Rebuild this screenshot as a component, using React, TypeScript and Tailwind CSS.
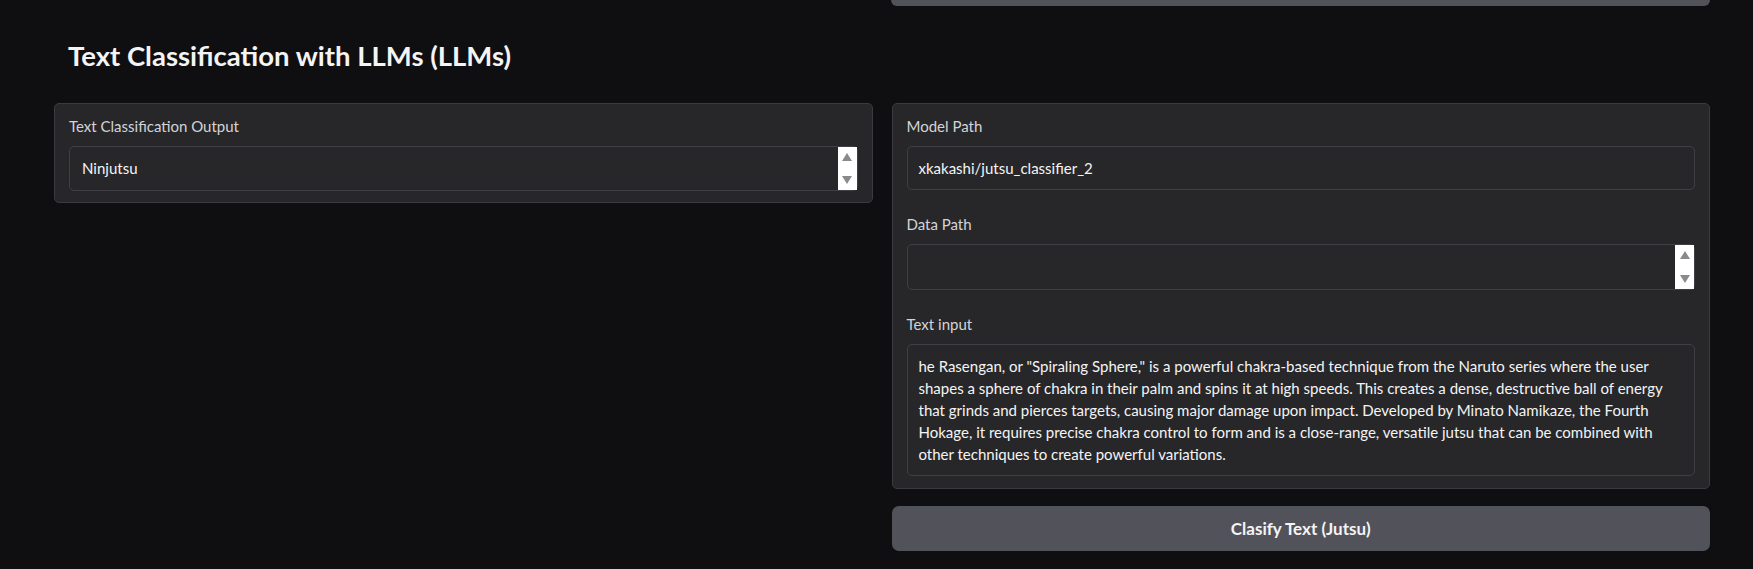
import React from "react";

const FONT = { fontFamily: "Lato, 'Noto Sans', sans-serif" };

function ScrollArrows() {
  return (
    <div className="absolute right-0 top-0 flex h-full w-[19px] flex-col items-center justify-between bg-white py-[5px]">
      <svg width="12" height="10" viewBox="0 0 12 10" aria-hidden>
        <path d="M6 1 L11 9 L1 9 Z" fill="#8a8a8a" />
      </svg>
      <svg width="12" height="10" viewBox="0 0 12 10" aria-hidden>
        <path d="M1 1 L11 1 L6 9 Z" fill="#8a8a8a" />
      </svg>
    </div>
  );
}

function Field({
  label,
  children,
}: {
  label: string;
  children: React.ReactNode;
}) {
  return (
    <div className="flex flex-col gap-[10px]">
      <span className="h-[20px] text-[15px] leading-[20px] text-[#d4d4d8]">{label}</span>
      {children}
    </div>
  );
}

const TEXT_LINES = [
  'he Rasengan, or "Spiraling Sphere," is a powerful chakra-based technique from the Naruto series where the user',
  "shapes a sphere of chakra in their palm and spins it at high speeds. This creates a dense, destructive ball of energy",
  "that grinds and pierces targets, causing major damage upon impact. Developed by Minato Namikaze, the Fourth",
  "Hokage, it requires precise chakra control to form and is a close-range, versatile jutsu that can be combined with",
  "other techniques to create powerful variations.",
];

export default function App() {
  return (
    <div className="h-[569px] w-[1753px] overflow-hidden bg-[#0f0f11]" style={FONT}>
      <div className="flex justify-end pr-[43px]">
        <div className="h-[6px] w-[819px] rounded-b-[6px] bg-[#52525b]" />
      </div>

      <h2 className="mt-[30px] pl-[68px] text-[27.5px] font-bold leading-[40px] text-[#f4f4f5]">
        Text Classification with LLMs (LLMs)
      </h2>

      <div className="mt-[27px] grid grid-cols-2 items-start gap-[19px] pl-[54px] pr-[43px]">
        <div className="rounded-[5px] border border-[#3a3a40] bg-[#27272a] px-[14px] pb-[11px] pt-[12px]">
          <Field label="Text Classification Output">
            <div className="relative h-[45px] rounded-[5px] border border-[#3f3f46] bg-[#27272a]">
              <div className="px-[12px] py-[10px] text-[15px] leading-[22px] text-[#f4f4f5]">Ninjutsu</div>
              <ScrollArrows />
            </div>
          </Field>
        </div>

        <div className="flex flex-col gap-[17px]">
          <div className="flex flex-col gap-[24px] rounded-[5px] border border-[#3a3a40] bg-[#27272a] px-[14px] pb-[12px] pt-[12px]">
            <Field label="Model Path">
              <div className="h-[44px] rounded-[5px] border border-[#3f3f46] bg-[#27272a] px-[11px] py-[10px] text-[15px] leading-[22px] text-[#f4f4f5]">
                xkakashi/jutsu_classifier_2
              </div>
            </Field>
            <Field label="Data Path">
              <div className="relative h-[46px] rounded-[5px] border border-[#3f3f46] bg-[#27272a]">
                <ScrollArrows />
              </div>
            </Field>
            <Field label="Text input">
              <div className="h-[132px] rounded-[5px] border border-[#3f3f46] bg-[#27272a] px-[11px] py-[10px] text-[15px] leading-[22px] text-[#f4f4f5]">
                {TEXT_LINES.map((l) => (
                  <div key={l} className="whitespace-nowrap">
                    {l}
                  </div>
                ))}
              </div>
            </Field>
          </div>
          <button
            type="button"
            className="h-[45px] rounded-[7px] bg-[#52525b] text-[17px] font-bold text-[#f4f4f5]"
          >
            Clasify Text (Jutsu)
          </button>
        </div>
      </div>
    </div>
  );
}
